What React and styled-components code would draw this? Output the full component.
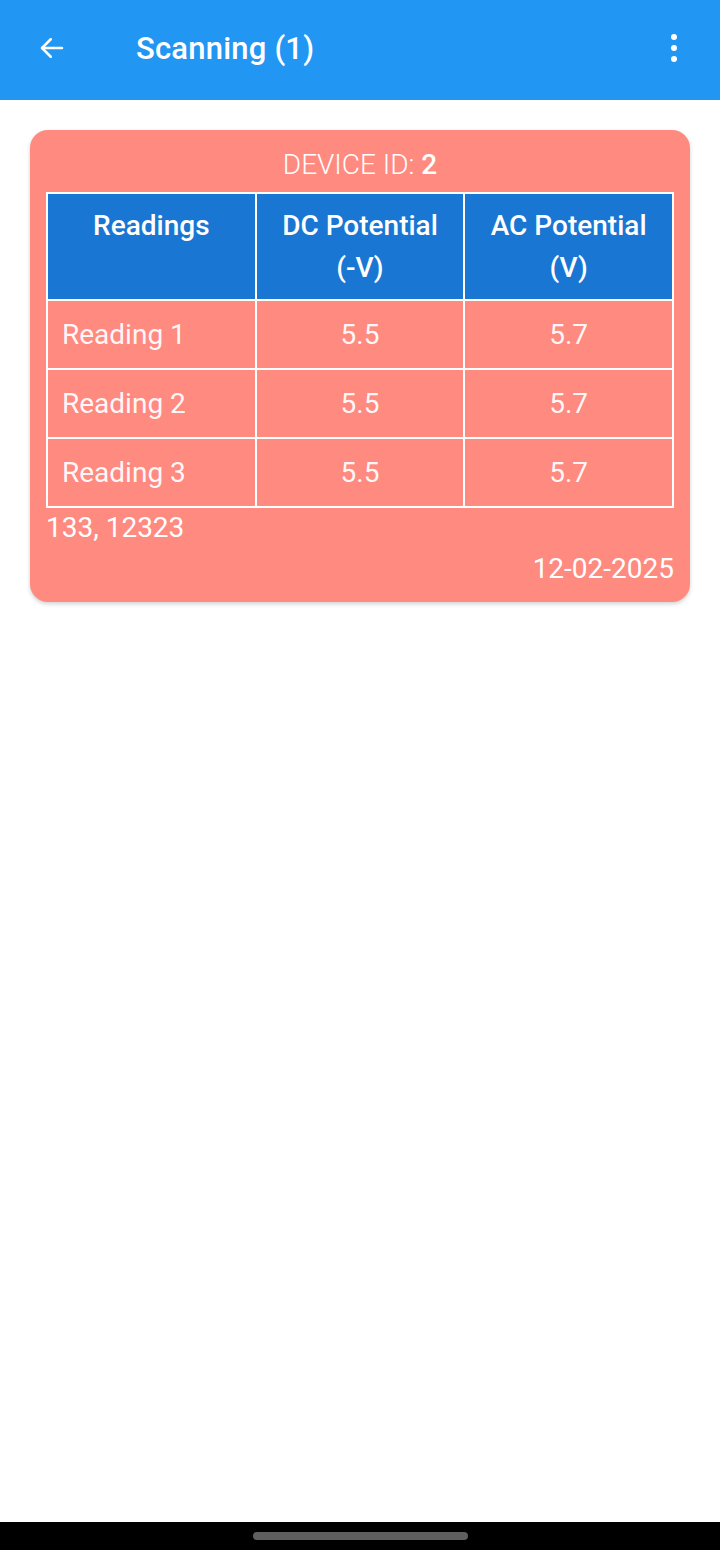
import React from "react";
import styled, { createGlobalStyle } from "styled-components";

// ── Styles ──────────────────────────────────────────────────
const GlobalStyle = createGlobalStyle`
  html, body {
    margin: 0;
    padding: 0;
    background: #fff;
    font-family: Roboto, "Noto Sans", "Liberation Sans", sans-serif;
  }
`;

const Screen = styled.div`
  width: 720px;
  height: 1550px;
  display: flex;
  flex-direction: column;
  background: #fff;
`;

const AppBar = styled.div`
  height: 100px;
  flex-shrink: 0;
  background: #2196f3;
  display: flex;
  align-items: center;
  padding: 0 20px 4px 26px;
  box-sizing: border-box;
  color: #fff;
`;

const IconBtn = styled.div`
  width: 52px;
  height: 52px;
  display: flex;
  align-items: center;
  justify-content: center;
`;

const Title = styled.div`
  flex: 1;
  margin-left: 58px;
  font-size: 31px;
  font-weight: 500;
  letter-spacing: 0.2px;
`;

const Body = styled.div`
  flex: 1;
  padding: 30px 30px;
`;

const Card = styled.div`
  background: #ff8a80;
  border-radius: 18px;
  padding: 21px 16px 19px;
  box-shadow: 0 2px 4px rgba(0, 0, 0, 0.18);
  color: #fff;
`;

const DeviceId = styled.div`
  text-align: center;
  font-size: 28px;
  font-weight: 300;
  line-height: 28px;
  margin-bottom: 13px;

  b {
    font-weight: 500;
  }
`;

const Table = styled.table`
  width: 100%;
  border-collapse: collapse;
  border: 2px solid #fff;
  table-layout: fixed;
`;

const Th = styled.th`
  background: #1976d2;
  border: 2px solid #fff;
  font-size: 28px;
  font-weight: 500;
  line-height: 42px;
  padding: 11px 8px 10px;
  vertical-align: top;
  text-align: center;
`;

const Td = styled.td`
  border: 2px solid #fff;
  height: 67px;
  padding: 0 14px;
  font-size: 28px;
  font-weight: 400;
  text-align: ${(p) => (p.$left ? "left" : "center")};
  color: rgba(255, 255, 255, 0.95);
`;

const Location = styled.div`
  font-size: 28px;
  margin-top: 6px;
  line-height: 28px;
`;

const DateText = styled.div`
  font-size: 28px;
  text-align: right;
  margin-top: 13px;
  line-height: 28px;
`;

const NavBar = styled.div`
  height: 28px;
  flex-shrink: 0;
  background: #000;
  display: flex;
  justify-content: center;
  padding-top: 10px;
  box-sizing: border-box;
`;

const NavPill = styled.div`
  width: 215px;
  height: 8px;
  border-radius: 4px;
  background: #5f5f5f;
`;

const ROWS = [
  { label: "Reading 1", dc: "5.5", ac: "5.7" },
  { label: "Reading 2", dc: "5.5", ac: "5.7" },
  { label: "Reading 3", dc: "5.5", ac: "5.7" },
];

// ── Component ────────────────────────────────────────────────
const App = () => (
  <Screen>
    <GlobalStyle />
    <AppBar>
      <IconBtn>
        <svg width="30" height="30" viewBox="0 0 24 24" fill="none" stroke="#fff" strokeWidth="2" strokeLinecap="round" strokeLinejoin="round">
          <path d="M20 12H4" />
          <path d="M11 5l-7 7 7 7" />
        </svg>
      </IconBtn>
      <Title>Scanning (1)</Title>
      <IconBtn>
        <svg width="10" height="30" viewBox="0 0 10 30" fill="#fff">
          <circle cx="5" cy="4" r="3" />
          <circle cx="5" cy="15" r="3" />
          <circle cx="5" cy="26" r="3" />
        </svg>
      </IconBtn>
    </AppBar>

    <Body>
      <Card>
        <DeviceId>
          DEVICE ID: <b>2</b>
        </DeviceId>
        <Table>
          <thead>
            <tr>
              <Th>Readings</Th>
              <Th>
                DC Potential
                <br />
                (-V)
              </Th>
              <Th>
                AC Potential
                <br />
                (V)
              </Th>
            </tr>
          </thead>
          <tbody>
            {ROWS.map((r) => (
              <tr key={r.label}>
                <Td $left>{r.label}</Td>
                <Td>{r.dc}</Td>
                <Td>{r.ac}</Td>
              </tr>
            ))}
          </tbody>
        </Table>
        <Location>133, 12323</Location>
        <DateText>12-02-2025</DateText>
      </Card>
    </Body>

    <NavBar>
      <NavPill />
    </NavBar>
  </Screen>
);

export default App;
